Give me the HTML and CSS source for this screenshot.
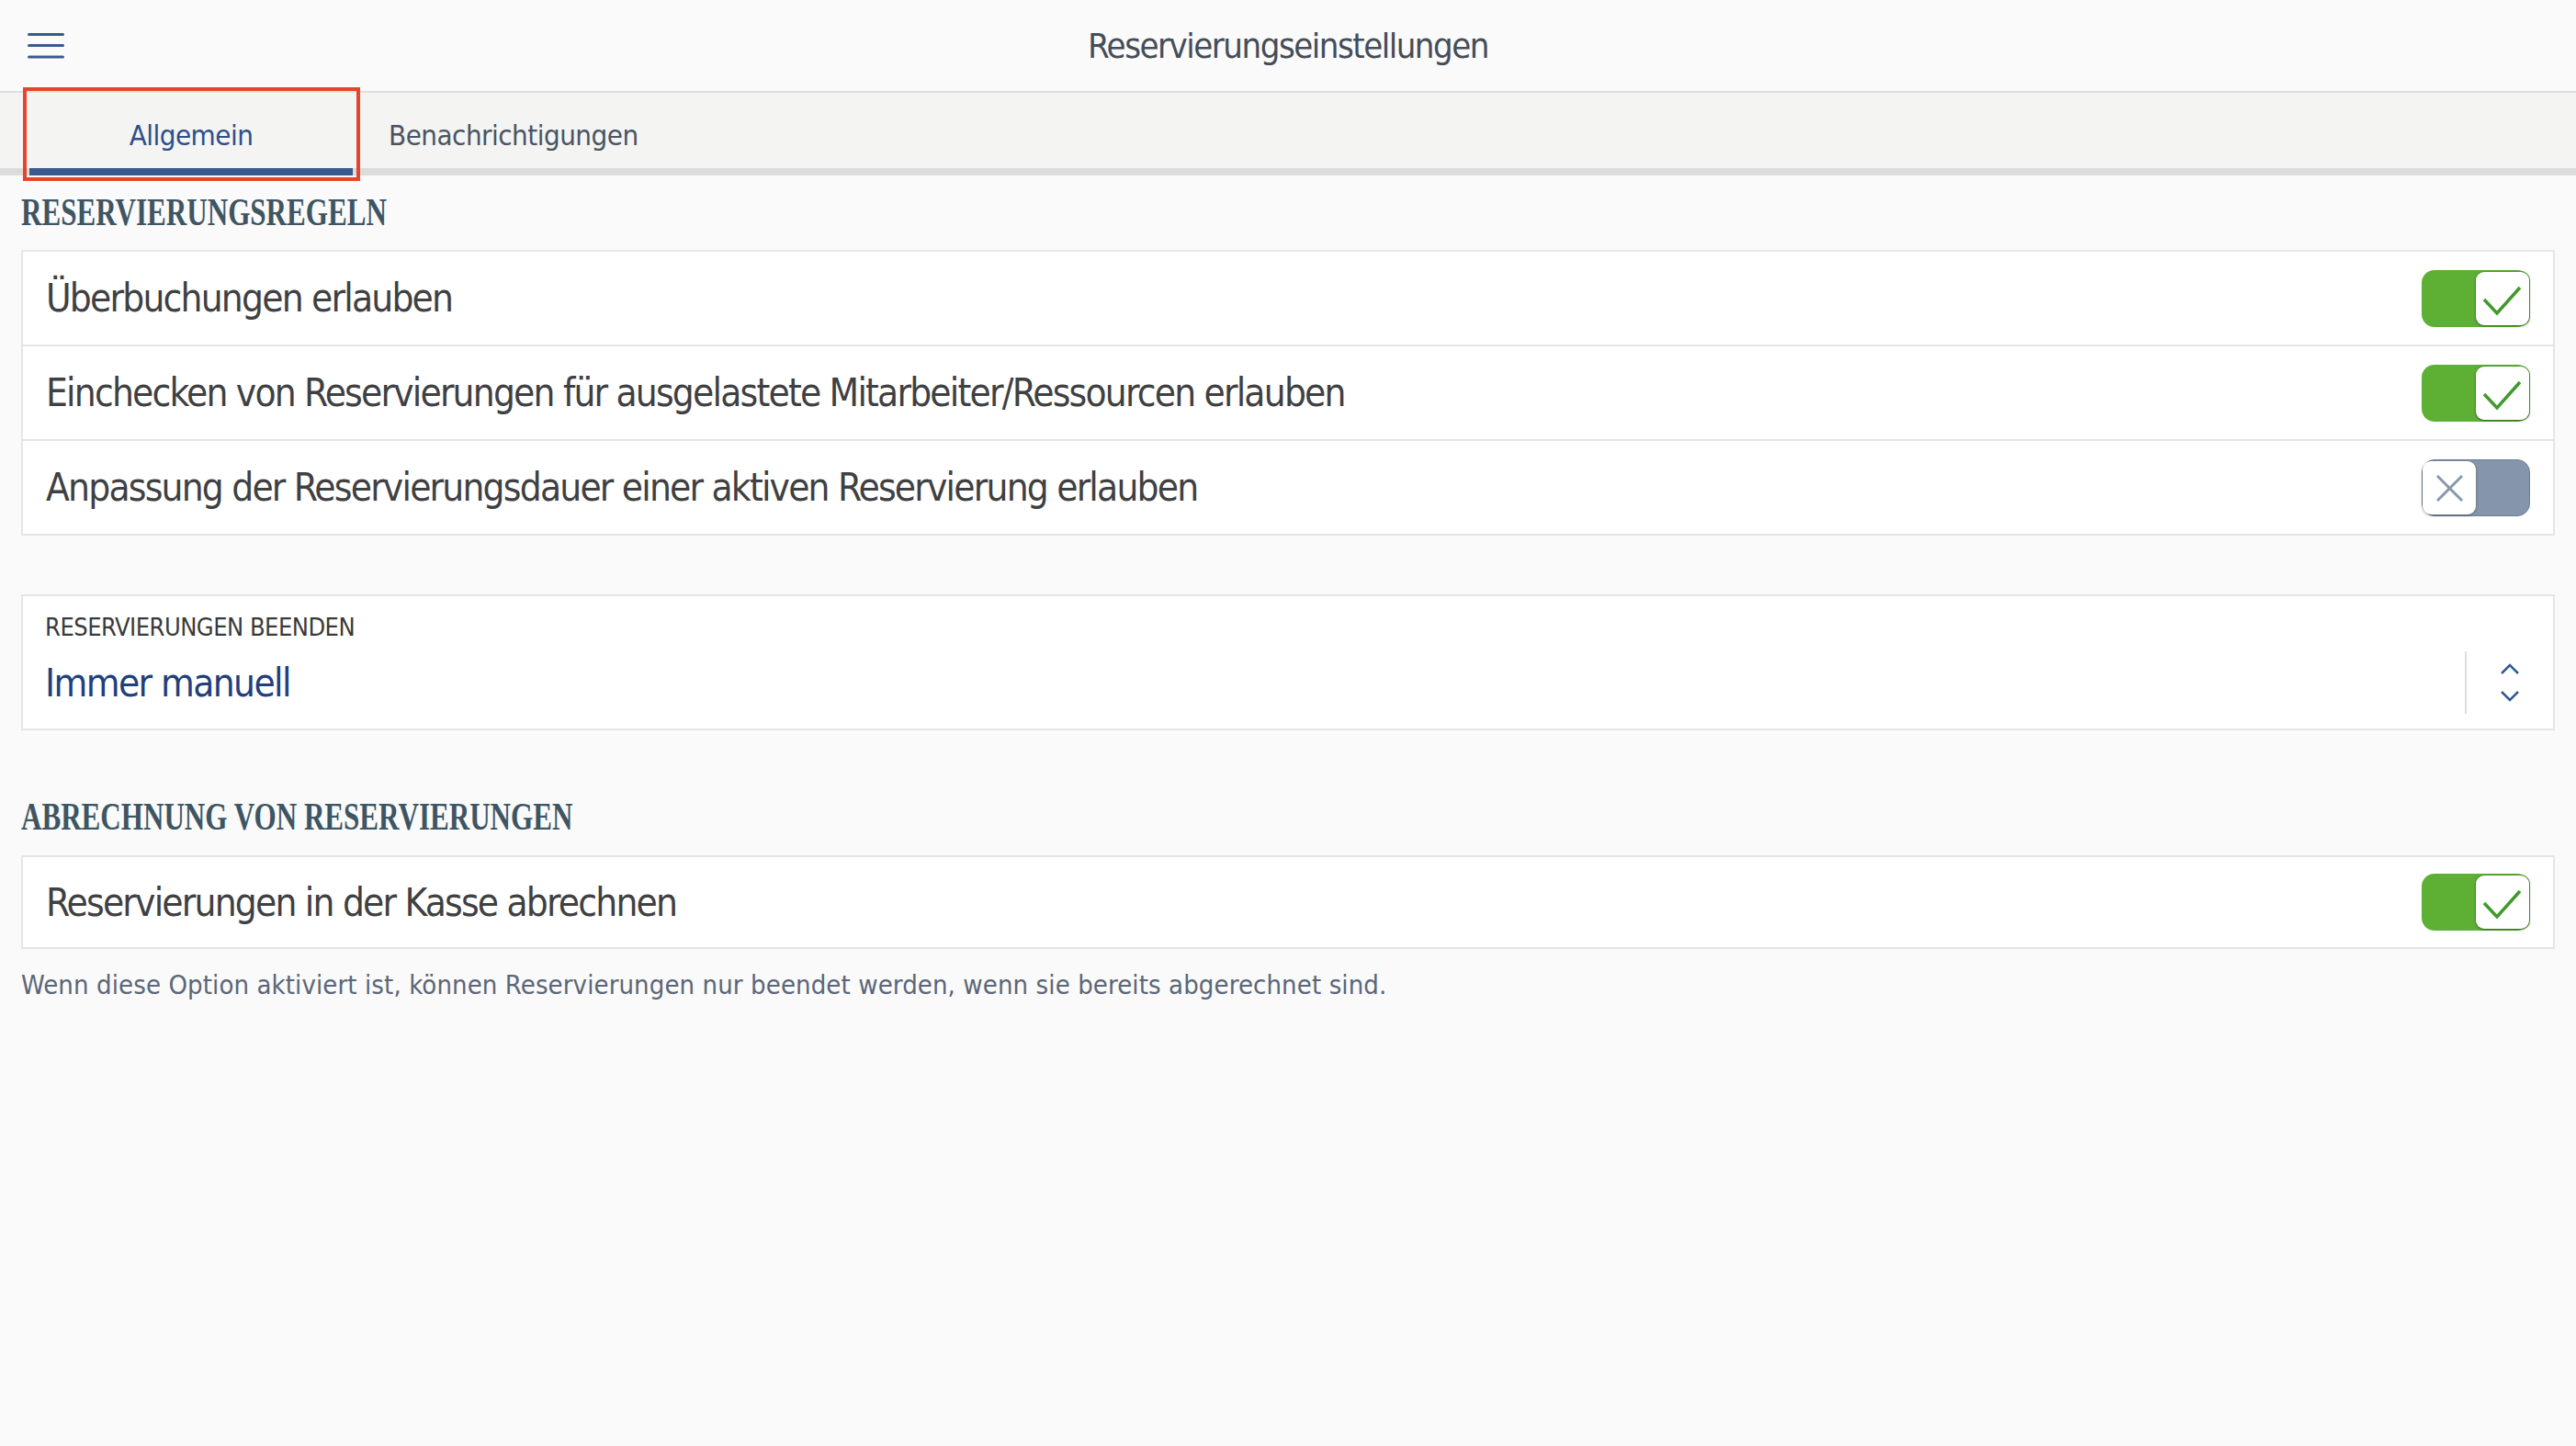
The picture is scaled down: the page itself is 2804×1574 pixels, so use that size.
FILE: index.html
```html
<!DOCTYPE html>
<html lang="de">
<head>
<meta charset="utf-8">
<title>Reservierungseinstellungen</title>
<link rel="stylesheet" href="styles.css">
</head>
<body>
<header class="topbar">
  <button class="menu-btn" aria-label="Menü">
    <svg width="40" height="30" viewBox="0 0 40 30"><g stroke="#3b5a8c" stroke-width="3" stroke-linecap="round"><line x1="1.5" y1="2.5" x2="38.5" y2="2.5"/><line x1="1.5" y1="14.5" x2="38.5" y2="14.5"/><line x1="1.5" y1="27" x2="38.5" y2="27"/></g></svg>
  </button>
  <h1 class="topbar-title">Reservierungseinstellungen</h1>
  <span class="topbar-spacer"></span>
</header>
<nav class="tabs">
  <a class="tab tab-active">Allgemein</a>
  <a class="tab">Benachrichtigungen</a>
</nav>
<main class="content">
  <h2 class="section-title"><span>RESERVIERUNGSREGELN</span></h2>
  <div class="card">
    <div class="row">
      <span class="row-label">Überbuchungen erlauben</span>
      <span class="toggle toggle-on"><span class="knob"><svg width="58" height="58" viewBox="0 0 58 58"><polyline points="9,30 23,45 48,17" fill="none" stroke="#3f9a2a" stroke-width="3.5"/></svg></span></span>
    </div>
    <div class="row">
      <span class="row-label">Einchecken von Reservierungen für ausgelastete Mitarbeiter/Ressourcen erlauben</span>
      <span class="toggle toggle-on"><span class="knob"><svg width="58" height="58" viewBox="0 0 58 58"><polyline points="9,30 23,45 48,17" fill="none" stroke="#3f9a2a" stroke-width="3.5"/></svg></span></span>
    </div>
    <div class="row">
      <span class="row-label">Anpassung der Reservierungsdauer einer aktiven Reservierung erlauben</span>
      <span class="toggle toggle-off"><span class="knob"><svg width="58" height="58" viewBox="0 0 58 58"><g stroke="#8797ae" stroke-width="3"><line x1="16" y1="16" x2="43" y2="43"/><line x1="43" y1="16" x2="16" y2="43"/></g></svg></span></span>
    </div>
  </div>

  <div class="card select-card">
    <div class="select-label">RESERVIERUNGEN BEENDEN</div>
    <div class="select-row">
      <span class="select-value">Immer manuell</span>
      <span class="select-sep"></span>
      <span class="select-arrows"><svg width="20" height="42" viewBox="0 0 20 42"><g fill="none" stroke="#2f5b95" stroke-width="2.5"><polyline points="1,11 10,2 19,11"/><polyline points="1,31 10,40 19,31"/></g></svg></span>
    </div>
  </div>

  <h2 class="section-title section-title-second"><span>ABRECHNUNG VON RESERVIERUNGEN</span></h2>
  <div class="card">
    <div class="row row-single">
      <span class="row-label">Reservierungen in der Kasse abrechnen</span>
      <span class="toggle toggle-on"><span class="knob"><svg width="58" height="58" viewBox="0 0 58 58"><polyline points="9,30 23,45 48,17" fill="none" stroke="#3f9a2a" stroke-width="3.5"/></svg></span></span>
    </div>
  </div>
  <p class="hint">Wenn diese Option aktiviert ist, können Reservierungen nur beendet werden, wenn sie bereits abgerechnet sind.</p>
</main>
</body>
</html>
```

FILE: styles.css
```css
body {
  margin: 0;
  background: #fafafa;
  font-family: "DejaVu Sans Condensed", "Liberation Sans", sans-serif;
  color: #3f4042;
}

.topbar {
  height: 99px;
  border-bottom: 2px solid #dedede;
  background: #fafafa;
  display: grid;
  grid-template-columns: 1fr auto 1fr;
  align-items: center;
}

.menu-btn {
  justify-self: start;
  margin-left: 30px;
  padding: 0;
  border: 0;
  background: none;
  display: flex;
}

.topbar-title {
  margin: 0;
  font-size: 38px;
  letter-spacing: -1.5px;
  font-weight: 400;
  color: #444d58;
}

.tabs {
  display: flex;
  height: 82px;
  padding-left: 32px;
  background: #f4f4f3;
  border-bottom: 8px solid #dcdcdc;
}

.tab {
  position: relative;
  display: flex;
  align-items: center;
  justify-content: center;
  box-sizing: border-box;
  height: 90px;
  padding-top: 10px;
  border-bottom: 8px solid transparent;
  font-size: 31px;
  letter-spacing: -0.5px;
  color: #4a5462;
}

.tab + .tab {
  padding-left: 39px;
}

.tab-active {
  width: 352px;
  color: #2d4f8b;
  border-bottom-color: #3a5a8e;
}

.tab-active::after {
  content: "";
  position: absolute;
  left: -7px;
  right: -8px;
  top: -6px;
  bottom: -14px;
  border: 4px solid #e8442c;
}

.content {
  padding: 0 23px;
}

.section-title {
  margin: 15px 0 16px;
  height: 50px;
  line-height: 50px;
  font-family: "Liberation Serif", serif;
  font-weight: 700;
  font-size: 42px;
  color: #3e5563;
  white-space: nowrap;
}

.section-title span {
  display: inline-block;
  transform: scaleX(0.74);
  transform-origin: 0 50%;
}

.section-title-second {
  margin: 69px 0 17px;
}

.card {
  background: #fff;
  border: 2px solid #e5e5e5;
}

.row {
  display: flex;
  align-items: center;
  justify-content: space-between;
  height: 101px;
  padding: 0 25px 0 25px;
}

.row + .row {
  border-top: 2px solid #e5e5e5;
}

.row-single {
  height: 98px;
}

.row-label {
  font-size: 42px;
  letter-spacing: -1.8px;
  color: #3f4042;
}

.toggle {
  flex: none;
  display: flex;
  align-items: center;
  box-sizing: border-box;
  width: 118px;
  height: 62px;
  padding: 1px;
  border-radius: 14px;
}

.toggle-on {
  justify-content: flex-end;
  background: #5eb035;
}

.toggle-on .knob {
  box-shadow: 0 1px 3px rgba(0, 0, 0, 0.35), 0 0 0 1px #4e9f2c;
}

.toggle-off {
  justify-content: flex-start;
  background: #8596ab;
  border: 1px solid #6b7e98;
  padding: 0;
}

.knob {
  display: flex;
  width: 58px;
  height: 58px;
  background: #fff;
  border-radius: 9px;
  box-shadow: 0 1px 3px rgba(0, 0, 0, 0.35);
}

.select-card {
  margin-top: 64px;
  padding: 17px 0 23px 24px;
}

.select-label {
  font-size: 27px;
  line-height: 34px;
  letter-spacing: -0.5px;
  color: #3a3a3a;
}

.select-row {
  display: flex;
  align-items: center;
  height: 54px;
  margin-top: 16px;
}

.select-value {
  flex: 1;
  font-size: 42px;
  letter-spacing: -1.6px;
  color: #1f407d;
}

.select-sep {
  flex: none;
  width: 2px;
  height: 68px;
  background: #dedede;
}

.select-arrows {
  flex: none;
  width: 94px;
  display: flex;
  justify-content: center;
}

.hint {
  margin: 22px 0 0;
  font-size: 29px;
  line-height: 34px;
  letter-spacing: 0.1px;
  color: #5b6678;
}
```
